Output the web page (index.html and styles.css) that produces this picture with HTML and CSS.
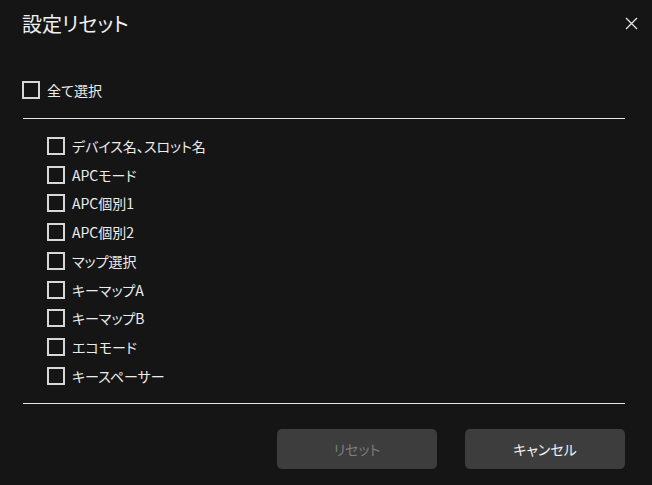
FILE: index.html
```html
<!DOCTYPE html>
<html lang="ja">
<head>
  <meta charset="UTF-8" />
  <title>設定リセット</title>
  <link rel="stylesheet" href="styles.css">
</head>
<body>
  <div class="dialog">
    <div class="header">
      <h1 class="title">設定リセット</h1>
      <button class="close" aria-label="閉じる">
        <svg width="13" height="13" viewBox="0 0 13 13">
          <path d="M1 1 L12 12 M12 1 L1 12" stroke="#e6e6e6" stroke-width="1.3" fill="none" />
        </svg>
      </button>
    </div>

    <label class="check select-all">
      <span class="box"></span>
      <span>全て選択</span>
    </label>

    <hr class="divider">

    <!-- reset targets -->
    <div class="items">
      <label class="check"><span class="box"></span><span>デバイス名、スロット名</span></label>
      <label class="check"><span class="box"></span><span>APCモード</span></label>
      <label class="check"><span class="box"></span><span>APC個別1</span></label>
      <label class="check"><span class="box"></span><span>APC個別2</span></label>
      <label class="check"><span class="box"></span><span>マップ選択</span></label>
      <label class="check"><span class="box"></span><span>キーマップA</span></label>
      <label class="check"><span class="box"></span><span>キーマップB</span></label>
      <label class="check"><span class="box"></span><span>エコモード</span></label>
      <label class="check"><span class="box"></span><span>キースペーサー</span></label>
    </div>

    <hr class="divider bottom">

    <div class="actions">
      <button class="btn" disabled>リセット</button>
      <button class="btn primary">キャンセル</button>
    </div>
  </div>
</body>
</html>
```

FILE: styles.css
```css
html, body {
  margin: 0;
  padding: 0;
  height: 100%;
  background: #151515;
  color: #f0f0f0;
  font-family: "Noto Sans CJK JP", "Noto Sans", sans-serif;
  font-feature-settings: "palt";
}

.dialog {
  padding: 9px 27px 0 22px;
}

.header {
  display: flex;
  justify-content: space-between;
  align-items: center;
  height: 30px;
}

.title {
  margin: 0;
  font-size: 20px;
  font-weight: 400;
  line-height: 30px;
}

.close {
  display: flex;
  padding: 0;
  margin: -1px -13px 0 0;
  background: none;
  border: none;
  cursor: pointer;
}

.check {
  display: flex;
  align-items: center;
  gap: 7px;
  height: 28.75px;
  font-size: 14px;
  color: #ececec;
}

.select-all {
  height: 28px;
  margin-top: 37px;
}

.box {
  box-sizing: border-box;
  width: 18px;
  height: 18px;
  border: 2px solid #d8d8d8;
}

.divider {
  margin: 14px 0 0 1px;
  border: none;
  height: 1px;
  background: #e8e8e8;
}

.items {
  padding: 12.6px 0 0 25px;
}

.divider.bottom {
  margin-top: 12.6px;
}

.actions {
  display: flex;
  justify-content: flex-end;
  gap: 28px;
  margin-top: 25px;
}

.btn {
  width: 160px;
  height: 40px;
  border: none;
  border-radius: 5px;
  background: #3d3d3d;
  color: #f2f2f2;
  font-family: inherit;
  font-feature-settings: "palt";
  font-size: 14px;
  font-weight: 400;
  cursor: pointer;
}

.btn:disabled {
  color: #7c7c7c;
  cursor: default;
}
```
